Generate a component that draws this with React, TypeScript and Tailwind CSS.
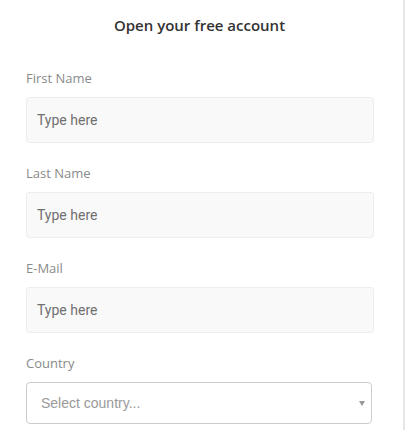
import React from "react";

const fields = ["First Name", "Last Name", "E-Mail"];

const Field = ({ label }: { label: string }) => (
  <div className="flex flex-col">
    <label className="text-[13px] leading-[18px] text-[#8a8a8a] font-['Open_Sans',sans-serif]">{label}</label>
    <input
      type="text"
      placeholder="Type here"
      className="mt-[10px] h-[46px] w-[348px] rounded-[3px] border border-[#eeeeee] bg-[#f9f9f9] px-[10px] font-['Roboto',sans-serif] text-[14px] text-[#555] outline-none placeholder:text-[#707070]"
    />
  </div>
);

const App = () => {
  return (
    <div className="min-h-[430px] w-[405px] border-r-2 border-[#e6e6e6] bg-white">
      <div className="flex flex-col px-[26px] pt-[15px]">
        <h1 className="pr-[4px] text-center font-['Open_Sans',sans-serif] text-[15px] font-semibold leading-[20px] text-[#333]">
          Open your free account
        </h1>
        <div className="mt-[34px] flex flex-col gap-[21px]">
          {fields.map((f) => (
            <Field key={f} label={f} />
          ))}
          <div className="flex flex-col">
            <label className="text-[13px] leading-[18px] text-[#8a8a8a] font-['Open_Sans',sans-serif]">Country</label>
            <div className="mt-[10px] flex h-[42px] w-[346px] items-center justify-between rounded-[4px] border border-[#cccccc] bg-white pl-[14px] pr-[6px]">
              <span className="font-['Liberation_Sans',Arial,sans-serif] text-[14px] text-[#999]">Select country...</span>
              <svg width="6" height="5" viewBox="0 0 6 5" className="mt-[1px]">
                <path d="M0 0 H6 L3 5 Z" fill="#999" />
              </svg>
            </div>
          </div>
        </div>
      </div>
    </div>
  );
};

export default App;
